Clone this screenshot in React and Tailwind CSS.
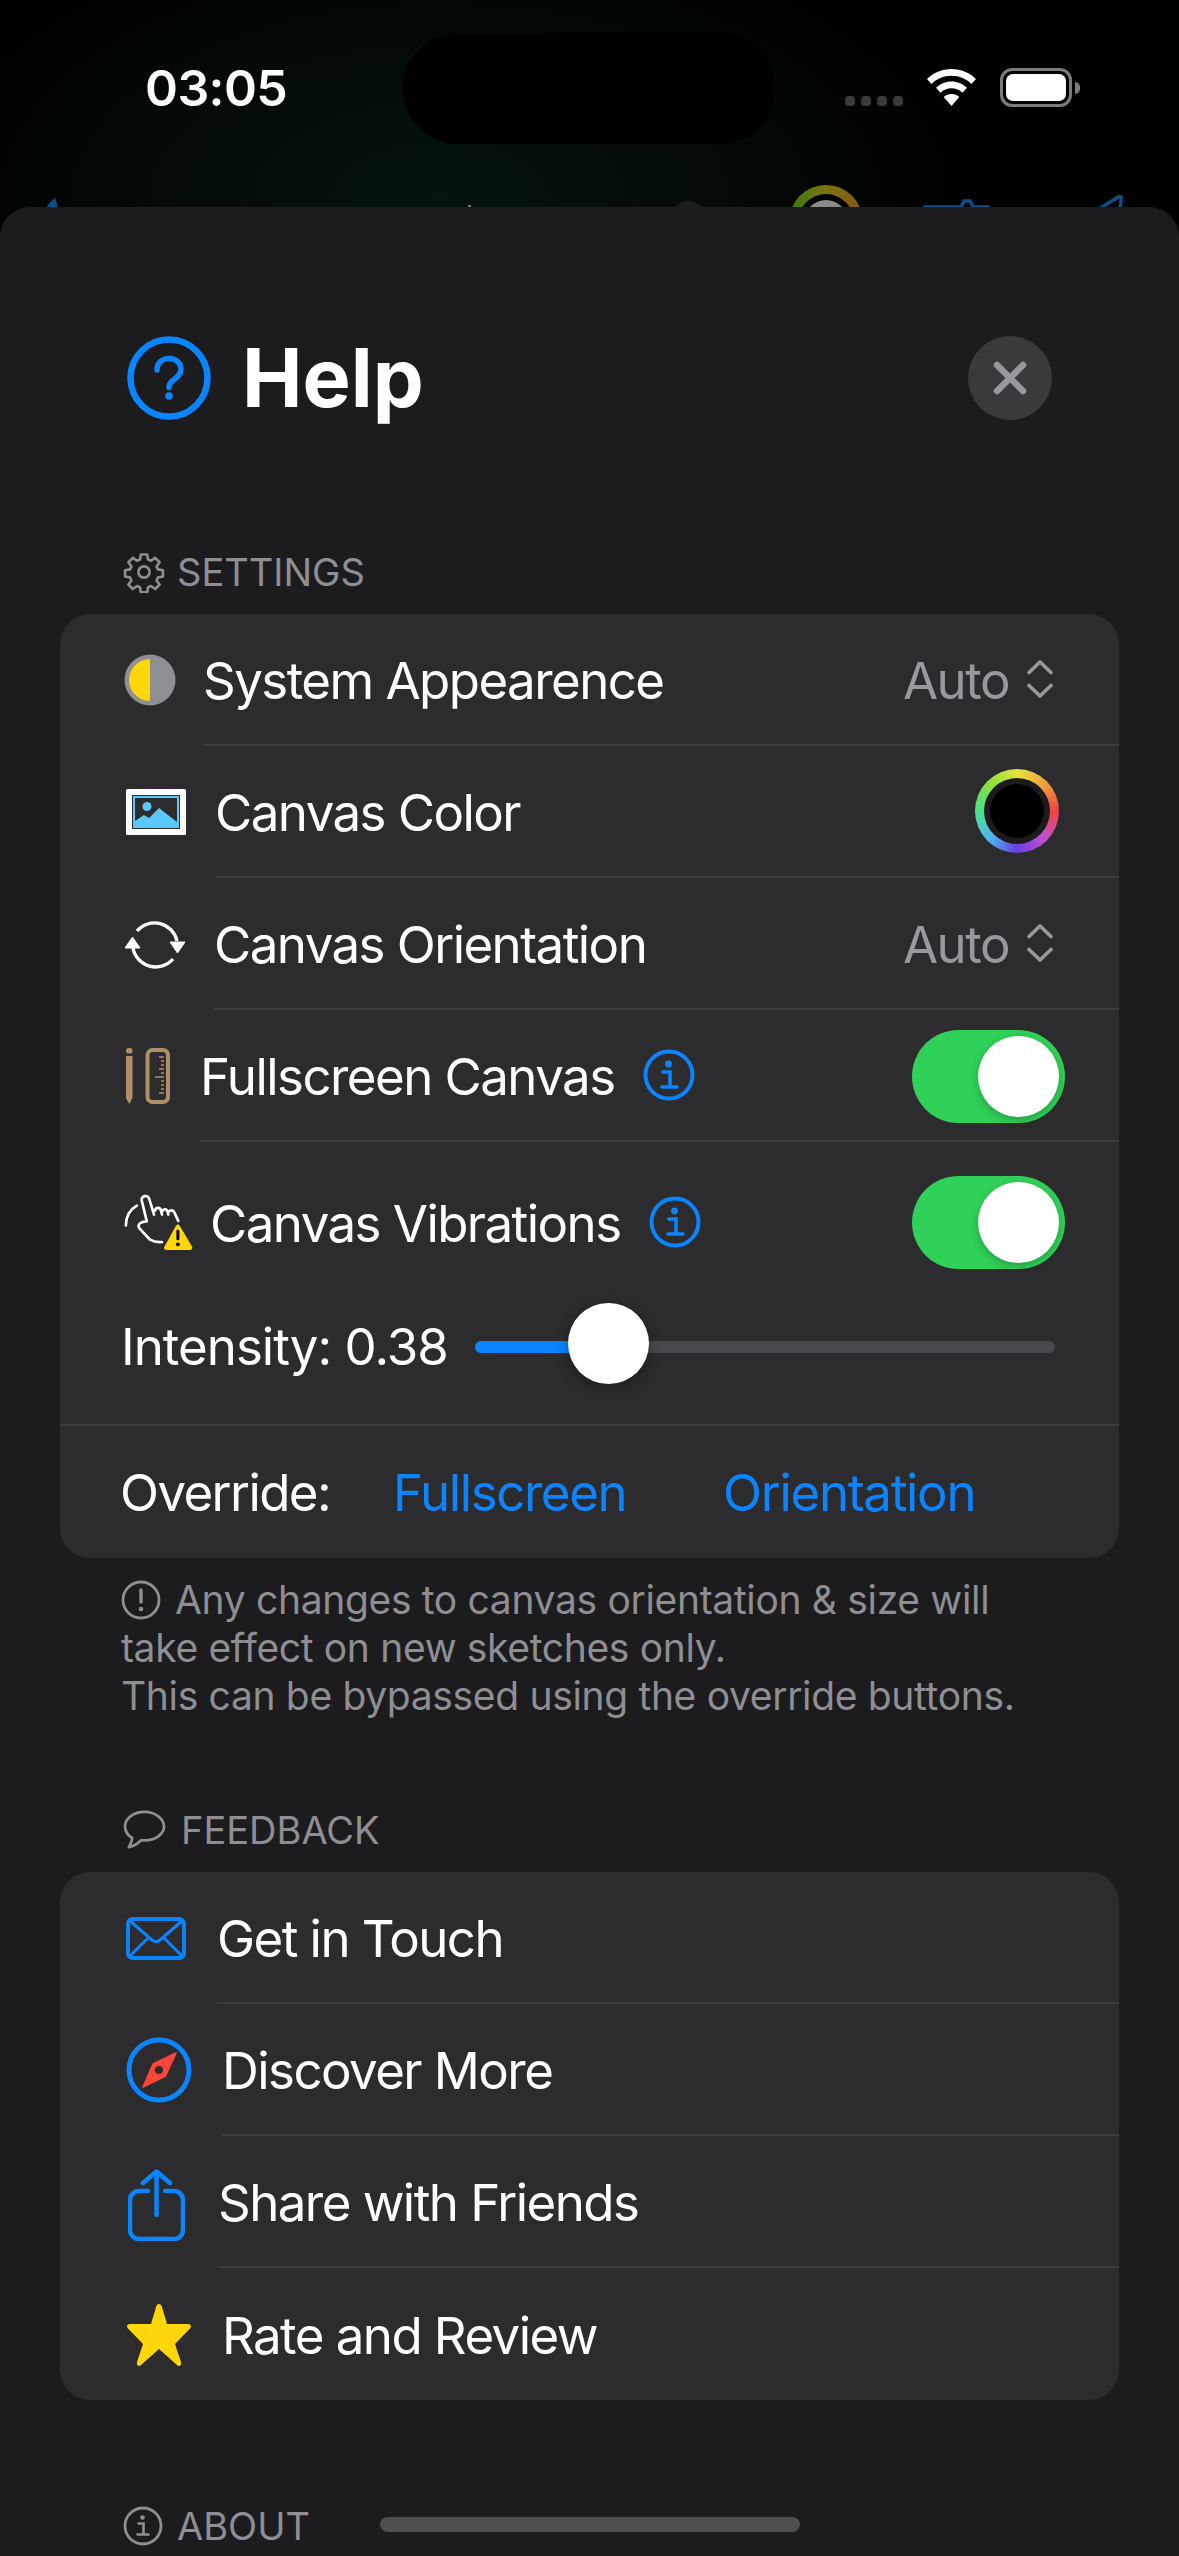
import React from "react";

const font = { fontFamily: "Inter, 'Liberation Sans', sans-serif" };

function Info() {
  return (
    <svg viewBox="0 0 52 52" className="w-[52px] h-[52px]" fill="none">
      <circle cx="26" cy="26" r="23.5" stroke="#0a84ff" strokeWidth="4" />
      <circle cx="25.5" cy="15" r="3.4" fill="#0a84ff" />
      <path d="M20 23h7v15M19 38h15" stroke="#0a84ff" strokeWidth="3.6" strokeLinecap="round" />
    </svg>
  );
}

function Chevrons() {
  return (
    <svg viewBox="0 0 26 38" className="w-[26px] h-[38px]" fill="none">
      <path d="M2 12.500 13 2l11 10.500M2 25.500 13 36l11-10.500" stroke="#98989e" strokeWidth="3.600" strokeLinecap="round" strokeLinejoin="round" />
    </svg>
  );
}

function Toggle() {
  return (
    <div className="w-[153px] h-[93px] rounded-full bg-[#30d158] flex items-center justify-end pr-[6px] shrink-0">
      <div className="w-[81px] h-[81px] rounded-full bg-white shadow-[0_3px_8px_rgba(0,0,0,0.25)]" />
    </div>
  );
}

function Row({ icon, iconW, last, children }) {
  return (
    <div className="flex items-stretch pl-[64px]">
      <div className={"flex items-center shrink-0 " + iconW}>{icon}</div>
      <div className={"flex-1 h-[132px] flex items-center justify-between " + (last ? "" : "border-b-[2px] border-[#3c3c3f]")}>
        {children}
      </div>
    </div>
  );
}

const Label = ({ children }) => <span className="inline-block pt-[3px] text-[51px] leading-[60px] text-white tracking-[-1.55px]">{children}</span>;

const Auto = () => (
  <div className="flex items-center gap-[18px] pr-[66px]">
    <span className="inline-block pt-[3px] text-[51px] leading-[60px] text-[#98989e] tracking-[-1.500px]">Auto</span>
    <Chevrons />
  </div>
);

function SectionHeader({ icon, title, gap }) {
  return (
    <div className={"flex items-center pl-[123px] " + gap}>
      {icon}
      <span className="text-[38px] leading-[46px] text-[#8e8e93]">{title}</span>
    </div>
  );
}

export default function App() {
  return (
    <div style={font} className="relative w-[1179px] h-[2556px] overflow-hidden bg-black bg-[radial-gradient(ellipse_560px_300px_at_440px_200px,#06140e_0%,#000000_100%)]">
      {/* peeking canvas toolbar behind the sheet */}
      <div className="absolute left-[789px] top-[185px] w-[74px] h-[74px] rounded-full bg-[conic-gradient(#7a7410,#8a4f10,#5a4a10,#2f7a12,#7a7410)] flex items-center justify-center">
        <div className="w-[56px] h-[56px] rounded-full bg-black flex items-center justify-center">
          <div className="w-[44px] h-[44px] rounded-full bg-[#8a8a88]" />
        </div>
      </div>
      <div className="absolute left-[670px] top-[201px] w-[37px] h-[37px] rounded-full bg-[#1a1f1c]" />
      <div className="absolute left-[468px] top-[205px] w-[3px] h-[3px] bg-[#777777]" />
      <svg className="absolute left-[44px] top-[196px]" width="18" height="14" viewBox="0 0 18 14" fill="none">
        <path d="M1 14Q5 6 11 2l4 12Z" fill="#0a4f86" />
      </svg>
      <svg className="absolute left-[922px] top-[198px]" width="70" height="12" viewBox="0 0 70 12" fill="none">
        <path d="M3 12V9h36l3-6h6l3 6h15v3" stroke="#0a4f86" strokeWidth="3.500" />
      </svg>
      <svg className="absolute left-[1096px] top-[193px]" width="30" height="16" viewBox="0 0 30 16" fill="none">
        <path d="M3 16 22 4q4-2 3 3l-1 9" stroke="#0a4f86" strokeWidth="3.500" />
      </svg>

      {/* status bar */}
      <div className="relative h-[207px] pl-[145px] pr-[99px] flex justify-between items-start pt-[62px]">
        <span className="text-[50px] leading-[52px] font-semibold text-white tracking-[-0.6px]">03:05</span>
        <div className="flex items-start gap-[23px] pt-[7px]">
          <div className="flex gap-[6px] pt-[27px]">
            {[0, 1, 2, 3].map((i) => (
              <div key={i} className="w-[10px] h-[10px] rounded-[4px] bg-[#3a3a3c]" />
            ))}
          </div>
          <svg width="51" height="37" viewBox="0 0 51 37" fill="#fff">
            <path d="M25.5 0C16 0 7.500 3.800 1 10l4.500 5C10.500 10 17.500 6.800 25.500 6.800S40.500 10 45.500 15L50 10C43.500 3.800 35 0 25.500 0Z" />
            <path d="M25.500 12.500c-6 0-11.500 2.400-15.500 6.300l4.500 5c2.900-2.800 6.800-4.500 11-4.500s8.100 1.700 11 4.500l4.500-5c-4-3.900-9.500-6.300-15.500-6.300Z" />
            <path d="M25.500 25c-3 0-5.800 1.200-7.800 3.100L25.500 37l7.800-8.900c-2-1.900-4.800-3.100-7.800-3.100Z" />
          </svg>
          <div className="flex items-center -mt-[1px]">
            <div className="w-[72px] h-[39px] rounded-[12px] border-[3px] border-[#7c7c7e] p-[3px]">
              <div className="w-full h-full rounded-[7px] bg-white" />
            </div>
            <div className="w-[5px] h-[12px] rounded-r-full bg-[#7c7c7e] ml-[3px]" />
          </div>
        </div>
        <div className="absolute left-[403px] top-[33px] w-[372px] h-[111px] rounded-[56px] bg-black" />
      </div>

      {/* sheet */}
      <div className="relative h-[2349px] rounded-t-[30px] bg-[#1c1c1e] overflow-hidden">
        <div className="flex items-center justify-between pl-[127px] pr-[127px] pt-[129px]">
          <div className="flex items-center gap-[31px]">
            <svg viewBox="0 0 84 84" className="w-[84px] h-[84px]" fill="none">
              <circle cx="42" cy="42" r="38.500" stroke="#0a84ff" strokeWidth="6.500" />
              <path d="M30 34c0-7 5-11.500 12-11.500S54 27 54 33c0 5-3 7.500-7 10.500-3 2.200-5 3.800-5 8" stroke="#0a84ff" strokeWidth="5.500" strokeLinecap="round" />
              <circle cx="42" cy="60" r="3.800" fill="#0a84ff" />
            </svg>
            <span className="text-[81px] leading-[84px] font-bold text-white tracking-[0px]">Help</span>
          </div>
          <div className="w-[84px] h-[84px] rounded-full bg-[#3a3a3c] flex items-center justify-center">
            <svg viewBox="0 0 34 34" className="w-[34px] h-[34px]" fill="none">
              <path d="M4 4l26 26M30 4 4 30" stroke="#98989e" strokeWidth="6.500" strokeLinecap="round" />
            </svg>
          </div>
        </div>

        <div className="mt-[129px]">
          <SectionHeader
            gap="gap-[12px]"
            title="SETTINGS"
            icon={
              <svg viewBox="0 0 24 24" className="w-[42px] h-[42px]" fill="none" stroke="#8e8e93" strokeWidth="1.500" strokeLinejoin="round">
                <path d="M10.200 2h3.600l.5 2.900 1.700.7 2.400-1.700 2.500 2.500-1.700 2.400.7 1.700 2.900.5v3.600l-2.900.5-.7 1.700 1.700 2.400-2.500 2.500-2.400-1.700-1.700.7-.5 2.900h-3.600l-.5-2.900-1.700-.7-2.400 1.700-2.500-2.500 1.700-2.400-.7-1.700-2.900-.5v-3.600l2.900-.5.7-1.700-1.700-2.400 2.500-2.500 2.400 1.700 1.700-.7Z" />
                <circle cx="12" cy="12" r="3.200" />
              </svg>
            }
          />
        </div>

        {/* settings card */}
        <div className="mx-[60px] mt-[19px] rounded-[30px] bg-[#2c2c2e]">
          <Row
            iconW="w-[79px]"
            icon={
              <svg viewBox="0 0 52 52" className="w-[52px] h-[52px]">
                <circle cx="26" cy="26" r="25.500" fill="#8e8e93" />
                <path d="M26 5a21 21 0 0 0 0 42Z" fill="#ffd60a" />
              </svg>
            }
          >
            <Label>System Appearence</Label>
            <Auto />
          </Row>
          <Row
            iconW="w-[91px]"
            icon={
              <svg viewBox="0 0 60 46" className="w-[60px] h-[46px] ml-[2px]">
                <rect width="60" height="46" rx="1.500" fill="#fff" />
                <rect x="6" y="6" width="48" height="34" fill="#2c2c2e" />
                <rect x="7" y="7" width="46" height="32" fill="#5ac8fa" />
                <rect x="9" y="9" width="42" height="28" fill="#2c2c2e" />
                <circle cx="21" cy="17.500" r="4.500" fill="#5ac8fa" />
                <path d="M9 32l9-6 5 3 10-10 18 14v4H9Z" fill="#5ac8fa" />
              </svg>
            }
          >
            <Label>Canvas Color</Label>
            <div className="mr-[60px] w-[84px] h-[84px] rounded-full bg-[conic-gradient(#e5e53c,#efa03c,#ef4444,#c04fd0,#6a3fe0,#4fb8f0,#4ae08a,#8be03c,#e5e53c)] flex items-center justify-center">
              <div className="w-[66px] h-[66px] rounded-full bg-[#1c1c1e] flex items-center justify-center">
                <div className="w-[54px] h-[54px] rounded-full bg-black" />
              </div>
            </div>
          </Row>
          <Row
            iconW="w-[90px]"
            icon={
              <svg viewBox="0 0 60 50" className="w-[60px] h-[50px] ml-[1px]" fill="none">
                <path d="M12 12A23 23 0 0 1 52 22" stroke="#fff" strokeWidth="3.400" />
                <path d="M8 29A23 23 0 0 0 48 40" stroke="#fff" strokeWidth="3.400" />
                <path d="M0 29h15L7.500 18ZM45 23h15l-7.500 11Z" fill="#fff" stroke="#fff" strokeWidth="1" strokeLinejoin="round" />
              </svg>
            }
          >
            <Label>Canvas Orientation</Label>
            <Auto />
          </Row>
          <Row
            iconW="w-[76px]"
            icon={
              <svg viewBox="0 0 44 56" className="w-[44px] h-[56px] ml-[2px]" fill="none">
                <rect x="0" y="0" width="6.500" height="5.500" rx="2.500" fill="#ad8f68" />
                <path d="M0 8h6.500v42L3.200 56 0 50Z" fill="#ad8f68" />
                <rect x="21.500" y="2" width="20.500" height="52" rx="5" stroke="#ad8f68" strokeWidth="4" />
                <path d="M38 9h-5M38 13h-3M38 17h-3M38 21h-5M38 25h-3M38 29h-9M38 33h-3M38 37h-3M38 41h-3M38 45h-5" stroke="#ad8f68" strokeWidth="1.500" />
              </svg>
            }
          >
            <div className="flex items-center gap-[28px]">
              <Label>Fullscreen Canvas</Label>
              <Info />
            </div>
            <div className="pr-[54px] pt-[2px]">
              <Toggle />
            </div>
          </Row>
          <div className="flex items-start pl-[64px] h-[160px]">
            <div className="w-[86px] h-[160px] flex items-center shrink-0">
              <svg viewBox="190 640 210 172" className="w-[70px] h-[57px]" fill="none">
                <path d="M195 735c0-28 12-48 33-60" stroke="#fff" strokeWidth="8" strokeLinecap="round" />
                <path d="M258 722 243 660c-3-15 18-20 23-4l14 46M283 690c3-12 16-10 18 0l3 12M305 692c4-9 14-7 16 2l2 8M324 694c5-7 15-6 18 3l11 24" stroke="#fff" strokeWidth="8" strokeLinecap="round" strokeLinejoin="round" />
                <path d="M258 722l-14 3c-12 4-13 13-8 19l32 34c10 6 22 8 36 7" stroke="#fff" strokeWidth="8" strokeLinecap="round" strokeLinejoin="round" />
                <path d="M345 738c4-8 10-8 14 0l35 60c4 6 1 11-6 11h-70c-7 0-10-5-6-11Z" fill="#ffd60a" />
                <path d="M352 752v24" stroke="#000" strokeWidth="9" strokeLinecap="round" />
                <circle cx="352" cy="792" r="6" fill="#000" />
              </svg>
            </div>
            <div className="flex-1 h-[160px] flex items-center justify-between">
              <div className="flex items-center gap-[28px]">
                <Label>Canvas Vibrations</Label>
                <Info />
              </div>
              <div className="pr-[54px]">
                <Toggle />
              </div>
            </div>
          </div>
          <div className="h-[124px] border-b-[2px] border-[#3c3c3f] flex items-start pl-[61px] pr-[64px] pt-[15px]">
            <div className="flex items-center w-full">
              <span className="text-[51px] leading-[60px] text-white tracking-[-1px] w-[354px] shrink-0">Intensity: 0.38</span>
              <div className="relative flex-1 h-[12px] rounded-full bg-[#48484d]">
                <div className="h-full w-[133px] rounded-full bg-[#0a84ff]" />
                <div className="absolute left-[93px] top-[-38px] w-[81px] h-[81px] rounded-full bg-white shadow-[0_4px_14px_rgba(0,0,0,0.35)]" />
              </div>
            </div>
          </div>
          <div className="h-[132px] flex items-center pl-[60px] pt-[2px]">
            <span className="text-[51px] leading-[60px] text-white tracking-[-1.6px] w-[273px]">Override:</span>
            <span className="text-[51px] leading-[60px] text-[#0a84ff] tracking-[-1.4px] w-[330px]">Fullscreen</span>
            <span className="text-[51px] leading-[60px] text-[#0a84ff] tracking-[-1.3px]">Orientation</span>
          </div>
        </div>

        {/* note */}
        <div className="relative pl-[121px] pr-[60px] mt-[18px] text-[39px] leading-[48px] text-[#8e8e93] tracking-[-0.33px]">
          <svg viewBox="0 0 40 40" className="inline-block w-[40px] h-[40px] mr-[14px] align-[-6px]" fill="none">
            <circle cx="20" cy="20" r="18" stroke="#8e8e93" strokeWidth="2.800" />
            <path d="M20 10v12" stroke="#8e8e93" strokeWidth="3.400" strokeLinecap="round" />
            <circle cx="20" cy="29" r="2.300" fill="#8e8e93" />
          </svg>
          Any changes to canvas orientation &amp; size will
          <br />
          take effect on new sketches only.
          <br />
          This can be bypassed using the override buttons.
        </div>

        <div className="mt-[87px]">
          <SectionHeader
            gap="gap-[15px]"
            title="FEEDBACK"
            icon={
              <svg viewBox="0 0 44 42" className="w-[43px] h-[41px]" fill="none">
                <path d="M22 2C11 2 2 8.500 2 17c0 5 3 9 7.500 11.800-.6 3.800-2.300 7-3.500 9.200 5-1 9.500-3.800 12.500-7 1.200.1 2.400.2 3.500.2 11 0 20-6.300 20-14.200S33 2 22 2Z" stroke="#8e8e93" strokeWidth="2.800" strokeLinejoin="round" />
              </svg>
            }
          />
        </div>

        {/* feedback card */}
        <div className="mx-[60px] mt-[19px] rounded-[30px] bg-[#2c2c2e]">
          <Row
            iconW="w-[93px]"
            icon={
              <svg viewBox="0 0 60 43" className="w-[60px] h-[43px] ml-[2px]" fill="none">
                <rect x="2" y="2" width="56" height="39" rx="4.500" stroke="#0a84ff" strokeWidth="3.800" />
                <path d="M4 4l22 19c2.500 2 5.500 2 8 0L56 4M22 21 4 39M38 21l18 18" stroke="#0a84ff" strokeWidth="3" />
              </svg>
            }
          >
            <Label>Get in Touch</Label>
          </Row>
          <Row
            iconW="w-[98px]"
            icon={
              <svg viewBox="0 0 66 66" className="w-[66px] h-[66px] ml-[2px]" fill="none">
                <circle cx="33" cy="33" r="30" stroke="#0a84ff" strokeWidth="5" />
                <path d="M50 16 39.500 39 17 50l10-23Z" fill="#ff453a" strokeLinejoin="round" stroke="#ff453a" strokeWidth="1.500" />
                <circle cx="33" cy="33" r="4" fill="#2c2c2e" />
              </svg>
            }
          >
            <Label>Discover More</Label>
          </Row>
          <Row
            iconW="w-[94px]"
            icon={
              <svg viewBox="0 0 57 72" className="w-[57px] h-[72px] ml-[4px] mt-[6px]" fill="none">
                <path d="M20 22h-9a9 9 0 0 0-9 9v30a9 9 0 0 0 9 9h35a9 9 0 0 0 9-9V31a9 9 0 0 0-9-9h-9" stroke="#0a84ff" strokeWidth="4.500" strokeLinecap="round" />
                <path d="M28.500 46V3M15 14 28.500 2.500 42 14" stroke="#0a84ff" strokeWidth="4.500" strokeLinecap="round" strokeLinejoin="round" />
              </svg>
            }
          >
            <Label>Share with Friends</Label>
          </Row>
          <Row
            iconW="w-[98px]"
            last
            icon={
              <svg viewBox="0 0 66 63" className="w-[66px] h-[63px] ml-[2px]">
                <path d="M33 1c1.500 0 2.400 1 2.800 2.500L41 21h21c3 0 4 2.500 2 4.500L49 41l6 18c1 3.500-2 5-4 3L33 46 15 62c-2 2-5 .5-4-3l6-18L2 25.500C0 23.500 1 21 4 21h21l5.200-17.500C30.600 2 31.500 1 33 1Z" fill="#ffd60a" />
              </svg>
            }
          >
            <Label>Rate and Review</Label>
          </Row>
        </div>

        <div className="mt-[103px]">
          <SectionHeader
            gap="gap-[14px]"
            title="ABOUT"
            icon={
              <svg viewBox="0 0 40 40" className="w-[40px] h-[40px]" fill="none">
                <circle cx="20" cy="20" r="18" stroke="#8e8e93" strokeWidth="2.800" />
                <circle cx="19.500" cy="11.500" r="2.300" fill="#8e8e93" />
                <path d="M15.500 17.500h5v11M14.500 28.500h11" stroke="#8e8e93" strokeWidth="2.600" strokeLinecap="round" />
              </svg>
            }
          />
        </div>
      </div>

      {/* home indicator */}
      <div className="absolute left-[380px] top-[2517px] w-[420px] h-[15px] rounded-full bg-[#4f4f4f]" />
    </div>
  );
}
